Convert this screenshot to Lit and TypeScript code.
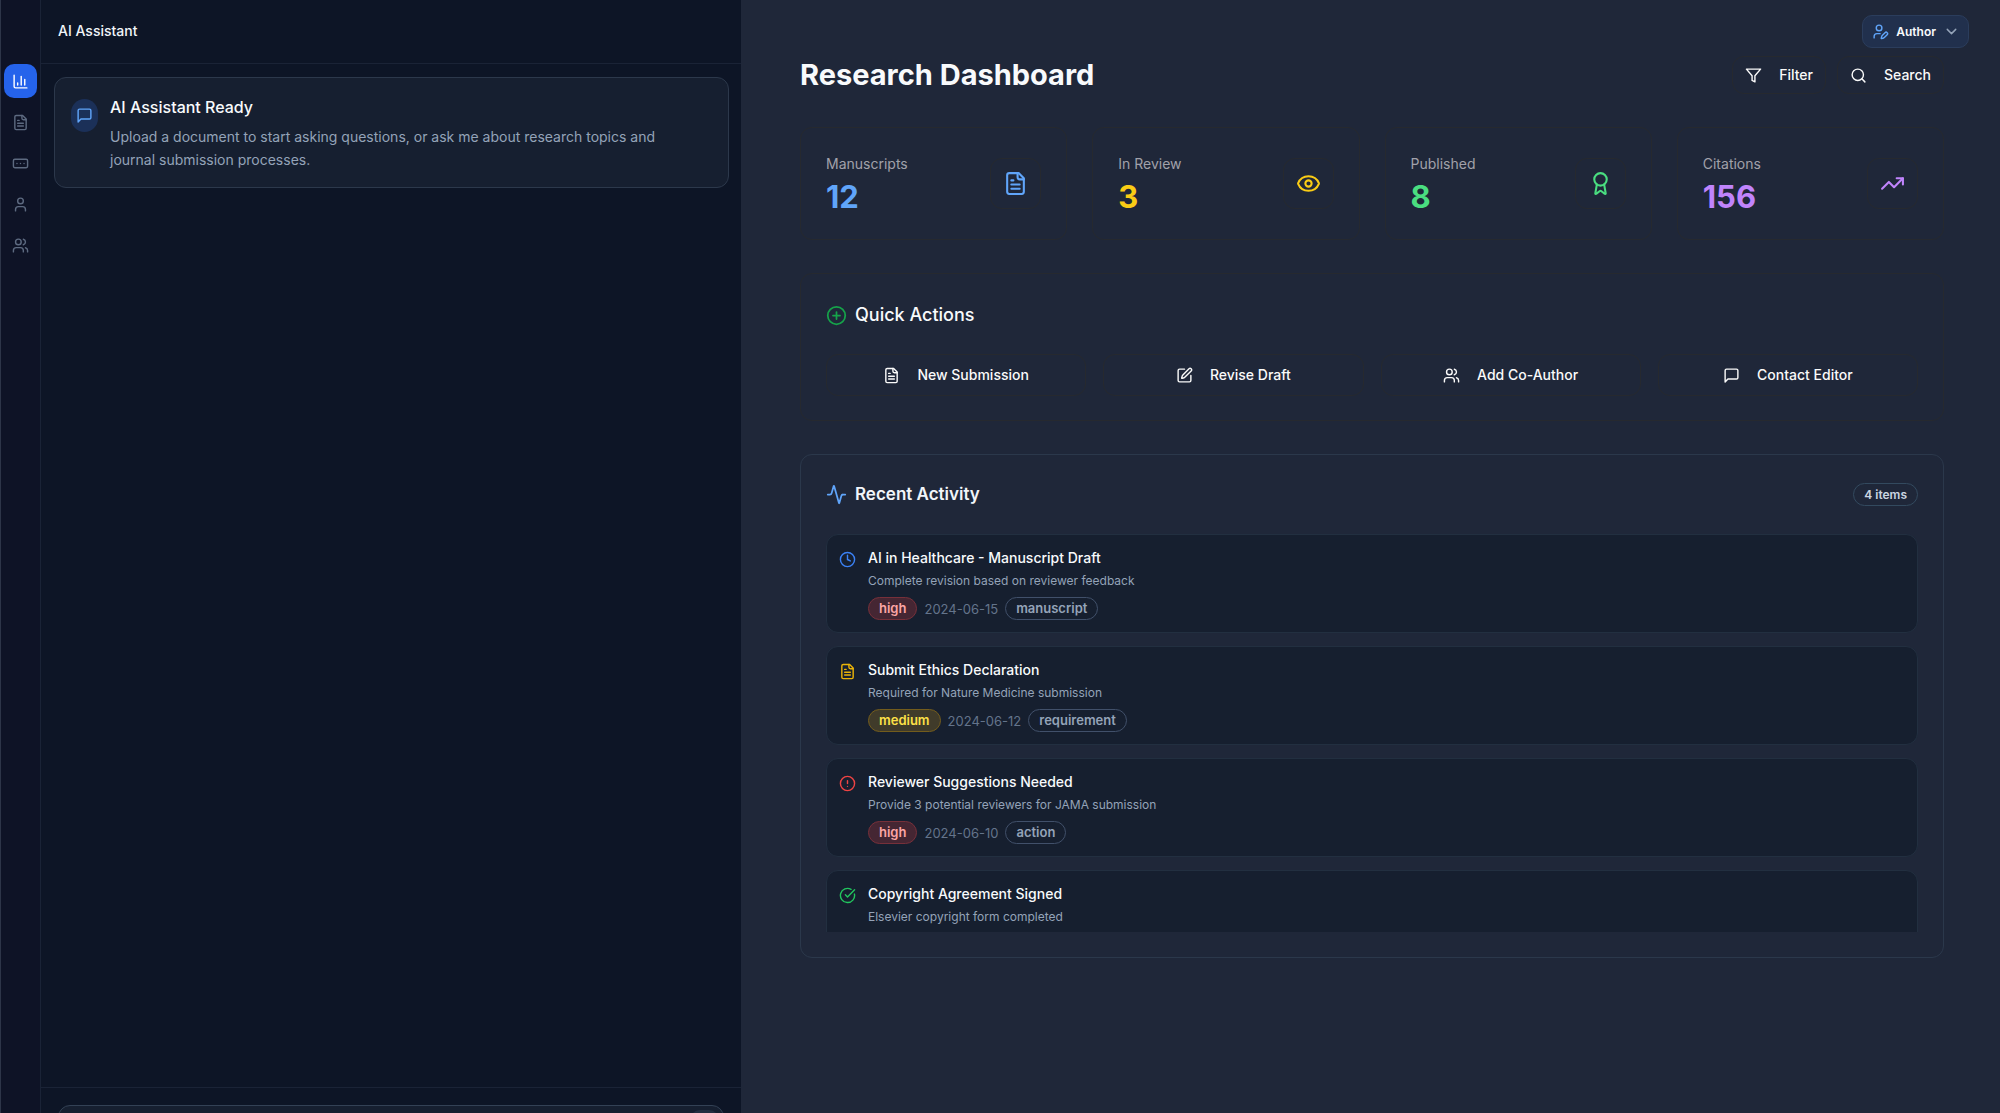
import { LitElement, html, css, svg, nothing } from "lit";
import { customElement, property } from "lit/decorators.js";

const ICONS: Record<string, unknown> = {
  chart: svg`<path d="M3 3v16a2 2 0 0 0 2 2h16"/><path d="M18 17V9"/><path d="M13 17V5"/><path d="M8 17v-3"/>`,
  file: svg`<path d="M15 2H6a2 2 0 0 0-2 2v16a2 2 0 0 0 2 2h12a2 2 0 0 0 2-2V7Z"/><path d="M14 2v4a2 2 0 0 0 2 2h4"/><path d="M10 9H8"/><path d="M16 13H8"/><path d="M16 17H8"/>`,
  ellipsis: svg`<rect width="20" height="12" x="2" y="6" rx="2"/><path d="M12 12h.01"/><path d="M17 12h.01"/><path d="M7 12h.01"/>`,
  user: svg`<path d="M19 21v-2a4 4 0 0 0-4-4H9a4 4 0 0 0-4 4v2"/><circle cx="12" cy="7" r="4"/>`,
  users: svg`<path d="M16 21v-2a4 4 0 0 0-4-4H6a4 4 0 0 0-4 4v2"/><circle cx="9" cy="7" r="4"/><path d="M22 21v-2a4 4 0 0 0-3-3.87"/><path d="M16 3.13a4 4 0 0 1 0 7.75"/>`,
  userPen: svg`<path d="M11.5 15H7a4 4 0 0 0-4 4v2"/><path d="M21.378 16.626a1 1 0 0 0-3.004-3.004l-4.01 4.012a2 2 0 0 0-.506.854l-.837 2.87a.5.5 0 0 0 .62.62l2.87-.837a2 2 0 0 0 .854-.506z"/><circle cx="10" cy="7" r="4"/>`,
  chevron: svg`<path d="m6 9 6 6 6-6"/>`,
  funnel: svg`<polygon points="22 3 2 3 10 12.46 10 19 14 21 14 12.46 22 3"/>`,
  search: svg`<circle cx="11" cy="11" r="8"/><path d="m21 21-4.3-4.3"/>`,
  message: svg`<path d="M21 15a2 2 0 0 1-2 2H7l-4 4V5a2 2 0 0 1 2-2h14a2 2 0 0 1 2 2z"/>`,
  eye: svg`<path d="M2.062 12.348a1 1 0 0 1 0-.696 10.75 10.75 0 0 1 19.876 0 1 1 0 0 1 0 .696 10.75 10.75 0 0 1-19.876 0"/><circle cx="12" cy="12" r="3"/>`,
  award: svg`<path d="m15.477 12.89 1.515 8.526a.5.5 0 0 1-.81.47l-3.58-2.687a1 1 0 0 0-1.197 0l-3.586 2.686a.5.5 0 0 1-.81-.469l1.514-8.526"/><circle cx="12" cy="8" r="6"/>`,
  trending: svg`<polyline points="22 7 13.5 15.5 8.5 10.5 2 17"/><polyline points="16 7 22 7 22 13"/>`,
  plus: svg`<circle cx="12" cy="12" r="10"/><path d="M8 12h8"/><path d="M12 8v8"/>`,
  pen: svg`<path d="M12 3H5a2 2 0 0 0-2 2v14a2 2 0 0 0 2 2h14a2 2 0 0 0 2-2v-7"/><path d="M18.375 2.625a1 1 0 0 1 3 3l-9.013 9.014a2 2 0 0 1-.853.505l-2.873.84a.5.5 0 0 1-.62-.62l.84-2.873a2 2 0 0 1 .506-.852z"/>`,
  activity: svg`<path d="M22 12h-2.48a2 2 0 0 0-1.93 1.46l-2.35 8.36a.25.25 0 0 1-.48 0L9.24 2.18a.25.25 0 0 0-.48 0l-2.35 8.36A2 2 0 0 1 4.49 12H2"/>`,
  clock: svg`<circle cx="12" cy="12" r="10"/><polyline points="12 6 12 12 16 14"/>`,
  alert: svg`<circle cx="12" cy="12" r="10"/><path d="M12 8v4"/><path d="M12 16h.01"/>`,
  check: svg`<path d="M21.801 10A10 10 0 1 1 17 3.335"/><path d="m9 11 3 3L22 4"/>`,
  send: svg`<path d="m22 2-7 20-4-9-9-4Z"/><path d="M22 2 11 13"/>`,
};

@customElement("line-icon")
class LineIcon extends LitElement {
  @property() name = "";

  static styles = css`
    :host {
      display: block;
      flex: none;
      width: 17px;
      height: 17px;
    }
    svg {
      display: block;
      width: 100%;
      height: 100%;
      fill: none;
      stroke: currentColor;
      stroke-width: 2;
      stroke-linecap: round;
      stroke-linejoin: round;
    }
  `;

  render() {
    return html`<svg viewBox="0 0 24 24" aria-hidden="true">${ICONS[this.name] ?? nothing}</svg>`;
  }
}

interface Activity {
  title: string;
  text: string;
  icon: string;
  tone: string;
  priority?: string;
  date?: string;
  kind?: string;
}

const NAV = [
  { icon: "chart", label: "Dashboard" },
  { icon: "file", label: "Manuscripts" },
  { icon: "ellipsis", label: "Messages" },
  { icon: "user", label: "Profile" },
  { icon: "users", label: "Team" },
];

const STATS = [
  { label: "Manuscripts", value: "12", icon: "file", tone: "blue" },
  { label: "In Review", value: "3", icon: "eye", tone: "yellow" },
  { label: "Published", value: "8", icon: "award", tone: "green" },
  { label: "Citations", value: "156", icon: "trending", tone: "purple" },
];

const ACTIONS = [
  { label: "New Submission", icon: "file" },
  { label: "Revise Draft", icon: "pen" },
  { label: "Add Co-Author", icon: "users" },
  { label: "Contact Editor", icon: "message" },
];

const ACTIVITY: Activity[] = [
  {
    title: "AI in Healthcare - Manuscript Draft",
    text: "Complete revision based on reviewer feedback",
    priority: "high",
    date: "2024-06-15",
    kind: "manuscript",
    icon: "clock",
    tone: "clock",
  },
  {
    title: "Submit Ethics Declaration",
    text: "Required for Nature Medicine submission",
    priority: "medium",
    date: "2024-06-12",
    kind: "requirement",
    icon: "file",
    tone: "amber",
  },
  {
    title: "Reviewer Suggestions Needed",
    text: "Provide 3 potential reviewers for JAMA submission",
    priority: "high",
    date: "2024-06-10",
    kind: "action",
    icon: "alert",
    tone: "red",
  },
  {
    title: "Copyright Agreement Signed",
    text: "Elsevier copyright form completed",
    icon: "check",
    tone: "done",
  },
];

@customElement("app-root")
class AppRoot extends LitElement {
  static styles = css`
    :host {
      display: flex;
      height: 100vh;
      overflow: hidden;
      background: #1f2739;
      color: #f8fafc;
      font-family: Inter, "Liberation Sans", sans-serif;
      font-size: 14px;
      line-height: 20px;
    }
    *,
    *::before,
    *::after {
      box-sizing: border-box;
    }
    h1,
    h2,
    h3,
    p,
    ul {
      margin: 0;
      padding: 0;
      font-size: inherit;
      font-weight: inherit;
    }
    ul {
      list-style: none;
    }
    button {
      display: flex;
      align-items: center;
      justify-content: center;
      margin: 0;
      padding: 0;
      border: 0;
      background: none;
      color: inherit;
      font: inherit;
      cursor: pointer;
    }

    .rail {
      flex: none;
      display: flex;
      flex-direction: column;
      align-items: center;
      gap: 7px;
      width: 41px;
      padding-top: 64px;
      background: #0e1326;
      border-left: 1px solid #2d3548;
      border-right: 1px solid #1a2336;
    }
    .rail button {
      width: 33px;
      height: 34px;
      border-radius: 10px;
      color: #5d6a80;
    }
    .rail .current {
      background: #2563eb;
      color: #ffffff;
    }

    .assistant {
      flex: none;
      display: flex;
      flex-direction: column;
      width: 35%;
      height: calc(100vh + 51px);
      background: #0d1526;
    }
    .assistant-head {
      padding: 21px 17px 22px;
      border-bottom: 1px solid #1a2336;
      font-weight: 500;
      color: #f1f5f9;
    }
    .assistant-body {
      flex: 1;
      padding: 13px 12px 13px 13px;
    }
    .notice {
      display: flex;
      gap: 12px;
      padding: 17px 32px 16px 16px;
      border: 1px solid #2c384b;
      border-radius: 12px;
      background: #161f30;
    }
    .notice-icon {
      flex: none;
      display: flex;
      align-items: center;
      justify-content: center;
      width: 27px;
      height: 33px;
      margin-top: 4px;
      border-radius: 16px;
      background: #1b3058;
      color: #60a5fa;
    }
    .notice h2 {
      font-size: 16px;
      line-height: 24px;
      font-weight: 500;
    }
    .notice p {
      margin-top: 6px;
      line-height: 23px;
      color: #94a3b8;
    }
    .composer {
      padding: 17px;
      border-top: 1px solid #1a2336;
    }
    .composer-box {
      display: flex;
      align-items: center;
      gap: 8px;
      height: 42px;
      padding: 0 4px 0 12px;
      border: 1px solid #334155;
      border-radius: 12px;
      background: #161f30;
    }
    .composer input {
      flex: 1;
      min-width: 0;
      border: 0;
      outline: 0;
      background: none;
      color: inherit;
      font: inherit;
    }
    .composer button {
      width: 29px;
      height: 33px;
      border-radius: 10px;
      background: #232e41;
      color: #64748b;
    }

    .main {
      flex: 1;
      min-width: 0;
    }
    .topbar {
      display: flex;
      justify-content: flex-end;
      padding: 15px 31px 0;
    }
    .role {
      gap: 7px;
      height: 33px;
      padding: 0 8px 0 9px;
      border: 1px solid #2b3d5c;
      border-radius: 10px;
      background: #21304d;
      font-size: 12px;
      font-weight: 600;
    }
    .role .person {
      color: #60a5fa;
    }
    .role .arrow {
      color: #94a3b8;
    }
    .content {
      display: flex;
      flex-direction: column;
      gap: 33px;
      padding: 8px 56px 0 59px;
    }
    .page-head {
      display: flex;
      align-items: center;
      justify-content: space-between;
    }
    .page-head h1 {
      font-size: 29px;
      line-height: 38px;
      font-weight: 700;
    }
    .tools {
      display: flex;
      gap: 11px;
    }
    .outline {
      gap: 17px;
      border: 1px solid #26292f;
      border-radius: 12px;
      font-weight: 500;
      color: #fafafa;
    }
    .tools .outline {
      height: 38px;
      padding: 0 12px;
    }
    .stats {
      display: grid;
      grid-template-columns: repeat(4, 1fr);
      gap: 25px;
    }
    .card {
      padding: 25px;
      border: 1px solid #26292f;
      border-radius: 12px;
    }
    .stat {
      display: flex;
      align-items: center;
      justify-content: space-between;
      height: 113px;
    }
    .stat-text {
      padding-top: 2px;
    }
    .stat-label {
      color: #a1a1aa;
    }
    .stat-value {
      margin-top: 4px;
      font-size: 31px;
      line-height: 37px;
      font-weight: 700;
    }
    .stat-icon {
      display: flex;
      align-items: center;
      justify-content: center;
      width: 51px;
      height: 51px;
      border: 1px solid #26292f;
      border-radius: 12px;
    }
    .stat-icon line-icon {
      width: 25px;
      height: 25px;
    }
    .blue {
      color: #60a5fa;
    }
    .yellow {
      color: #facc15;
    }
    .green {
      color: #4ade80;
    }
    .purple {
      color: #c084fc;
    }
    .clock {
      color: #3b82f6;
    }
    .amber {
      color: #eab308;
    }
    .red {
      color: #ef4444;
    }
    .done {
      color: #22c55e;
    }
    .plus {
      color: #16a34a;
    }
    .section-title {
      display: flex;
      align-items: center;
      gap: 8px;
      font-size: 18px;
      line-height: 32px;
      font-weight: 500;
    }
    .recent .section-title {
      font-size: 17px;
      font-weight: 600;
      color: #f1f5f9;
    }
    .section-title line-icon {
      width: 21px;
      height: 21px;
    }
    .quick {
      padding-bottom: 24px;
    }
    .quick-grid {
      display: grid;
      grid-template-columns: repeat(4, 1fr);
      gap: 17px;
      margin-top: 23px;
    }
    .quick-grid .outline {
      height: 42px;
    }
    .recent {
      border-color: #2b384b;
      padding-top: 23px;
    }
    .recent-head {
      display: flex;
      align-items: center;
      justify-content: space-between;
    }
    .badge {
      padding: 0 10px;
      border: 1px solid #41506a;
      border-radius: 12px;
      line-height: 21px;
      font-weight: 600;
      color: #94a3b8;
    }
    .recent-head .badge {
      font-size: 12px;
      color: #cbd5e1;
      border-color: #334a5f;
    }
    .list {
      display: flex;
      flex-direction: column;
      gap: 13px;
      height: 398px;
      margin-top: 24px;
      overflow: hidden;
    }
    .item {
      flex: none;
      display: flex;
      gap: 12px;
      min-height: 99px;
      padding: 12px;
      border: 1px solid #222f40;
      border-radius: 12px;
      background: #161f2f;
    }
    .item line-icon {
      margin-top: 4px;
    }
    .item h3 {
      line-height: 22px;
      font-weight: 500;
    }
    .item p {
      margin-top: 2px;
      font-size: 12px;
      line-height: 20px;
      color: #94a3b8;
    }
    .meta {
      display: flex;
      align-items: center;
      gap: 7px;
      margin-top: 6px;
      font-size: 13px;
      color: #64748b;
    }
    .high {
      background: #452633;
      border-color: #77303a;
      color: #fca5a5;
    }
    .medium {
      background: #403b2a;
      border-color: #735c1c;
      color: #fde047;
    }
  `;

  private renderMeta(a: Activity) {
    return html`<div class="meta">
      <span class="badge ${a.priority}">${a.priority}</span>
      <time datetime=${a.date}>${a.date}</time>
      <span class="badge">${a.kind}</span>
    </div>`;
  }

  render() {
    return html`
      <nav class="rail" aria-label="Sections">
        ${NAV.map(
          (n, i) => html`<button class=${i === 0 ? "current" : ""} aria-label=${n.label}>
            <line-icon name=${n.icon}></line-icon>
          </button>`
        )}
      </nav>

      <aside class="assistant">
        <h2 class="assistant-head">AI Assistant</h2>
        <div class="assistant-body">
          <div class="notice">
            <span class="notice-icon"><line-icon name="message"></line-icon></span>
            <div>
              <h2>AI Assistant Ready</h2>
              <p>
                Upload a document to start asking questions, or ask me about research topics and
                journal submission processes.
              </p>
            </div>
          </div>
        </div>
        <form class="composer" @submit=${(e: Event) => e.preventDefault()}>
          <div class="composer-box">
            <input type="text" aria-label="Message" />
            <button type="submit" aria-label="Send"><line-icon name="send"></line-icon></button>
          </div>
        </form>
      </aside>

      <main class="main">
        <div class="topbar">
          <button class="role" aria-haspopup="menu">
            <line-icon class="person" name="userPen"></line-icon>
            Author
            <line-icon class="arrow" name="chevron"></line-icon>
          </button>
        </div>
        <div class="content">
          <header class="page-head">
            <h1>Research Dashboard</h1>
            <div class="tools">
              <button class="outline"><line-icon name="funnel"></line-icon>Filter</button>
              <button class="outline"><line-icon name="search"></line-icon>Search</button>
            </div>
          </header>

          <section class="stats" aria-label="Statistics">
            ${STATS.map(
              (s) => html`<div class="card stat">
                <div class="stat-text">
                  <p class="stat-label">${s.label}</p>
                  <p class="stat-value ${s.tone}">${s.value}</p>
                </div>
                <span class="stat-icon ${s.tone}"><line-icon name=${s.icon}></line-icon></span>
              </div>`
            )}
          </section>

          <section class="card quick">
            <h2 class="section-title"><line-icon class="plus" name="plus"></line-icon>Quick Actions</h2>
            <div class="quick-grid">
              ${ACTIONS.map(
                (a) => html`<button class="outline"><line-icon name=${a.icon}></line-icon>${a.label}</button>`
              )}
            </div>
          </section>

          <section class="card recent">
            <div class="recent-head">
              <h2 class="section-title"><line-icon class="blue" name="activity"></line-icon>Recent Activity</h2>
              <span class="badge">4 items</span>
            </div>
            <ul class="list">
              ${ACTIVITY.map(
                (a) => html`<li class="item">
                  <line-icon class=${a.tone} name=${a.icon}></line-icon>
                  <div>
                    <h3>${a.title}</h3>
                    <p>${a.text}</p>
                    ${a.priority ? this.renderMeta(a) : nothing}
                  </div>
                </li>`
              )}
            </ul>
          </section>
        </div>
      </main>
    `;
  }
}
